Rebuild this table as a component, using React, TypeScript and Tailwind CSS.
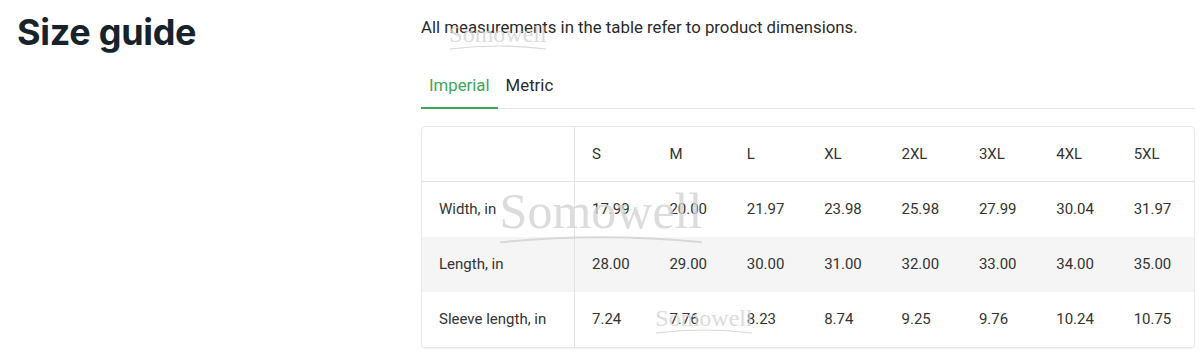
import React from "react";

const sizes = ["S", "M", "L", "XL", "2XL", "3XL", "4XL", "5XL"];
const rows: { label: string; values: string[] }[] = [
  { label: "Width, in", values: ["17.99", "20.00", "21.97", "23.98", "25.98", "27.99", "30.04", "31.97"] },
  { label: "Length, in", values: ["28.00", "29.00", "30.00", "31.00", "32.00", "33.00", "34.00", "35.00"] },
  { label: "Sleeve length, in", values: ["7.24", "7.76", "8.23", "8.74", "9.25", "9.76", "10.24", "10.75"] },
];

function Watermark({ className, size }: { className: string; size: "sm" | "lg" }) {
  const lg = size === "lg";
  return (
    <div className={`pointer-events-none absolute flex flex-col items-center ${className}`}>
      <span
        className={`leading-none text-[#d4d4d4] opacity-80 ${lg ? "text-[50px]" : "text-[24px]"}`}
        style={{ fontFamily: '"Liberation Serif", serif' }}
      >
        Somowell
      </span>
      <svg width={lg ? 210 : 100} height={lg ? 10 : 6} viewBox="0 0 100 6" preserveAspectRatio="none" className="-mt-[2px]">
        <path d="M2 5 Q50 -1 98 5" stroke="#d8d8d8" strokeWidth="1.2" fill="none" />
      </svg>
    </div>
  );
}

export default function App() {
  return (
    <div
      className="relative flex h-[360px] w-[1200px] bg-white text-[#333]"
      style={{ fontFamily: 'Roboto, "Liberation Sans", sans-serif' }}
    >
      <div className="w-[421px] shrink-0 pl-[17px] pt-[9px]">
        <h1
          className="text-[36px] font-bold leading-[46px] tracking-[-0.3px] text-[#17232b]"
          style={{ fontFamily: 'Inter, "Liberation Sans", sans-serif' }}
        >
          Size guide
        </h1>
      </div>
      <div className="flex w-[774px] flex-col pt-[15px]">
        <p className="text-[16.8px] leading-[24px] text-[#2a2a2a]">All measurements in the table refer to product dimensions.</p>
        <div className="mt-[34px] flex border-b border-[#e6e6e6]">
          <div className="-mb-px border-b-2 border-[#3da65a] px-[8px] pb-[10px] text-[16.8px] leading-[24px] text-[#3da65a]">
            Imperial
          </div>
          <div className="px-[8px] pb-[10px] text-[16.8px] leading-[24px] text-[#2a2a2a]">Metric</div>
        </div>
        <div className="mt-[17px] overflow-hidden rounded-[4px] border border-[#e8e8e8] shadow-[0_1px_2px_rgba(0,0,0,0.06)]">
          <div className="flex h-[55px] items-center border-b border-[#e3e3e3] text-[15px]">
            <div className="h-full w-[153px] shrink-0 border-r border-[#e3e3e3]" />
            {sizes.map((s) => (
              <div key={s} className="w-[77.5px] pl-[17px]">
                {s}
              </div>
            ))}
          </div>
          {rows.map((r, i) => (
            <div key={r.label} className={`flex h-[55px] items-center text-[15px] ${i === 1 ? "bg-[#f5f5f5]" : "bg-white"}`}>
              <div className="flex h-full w-[153px] shrink-0 items-center border-r border-[#e3e3e3] pl-[17px]">{r.label}</div>
              {r.values.map((v, j) => (
                <div key={j} className="w-[77.5px] pl-[17px]">
                  {v}
                </div>
              ))}
            </div>
          ))}
        </div>
      </div>
      <Watermark size="sm" className="left-[448px] top-[22px]" />
      <Watermark size="lg" className="left-[496px] top-[186px]" />
      <Watermark size="sm" className="left-[654px] top-[306px]" />
    </div>
  );
}
